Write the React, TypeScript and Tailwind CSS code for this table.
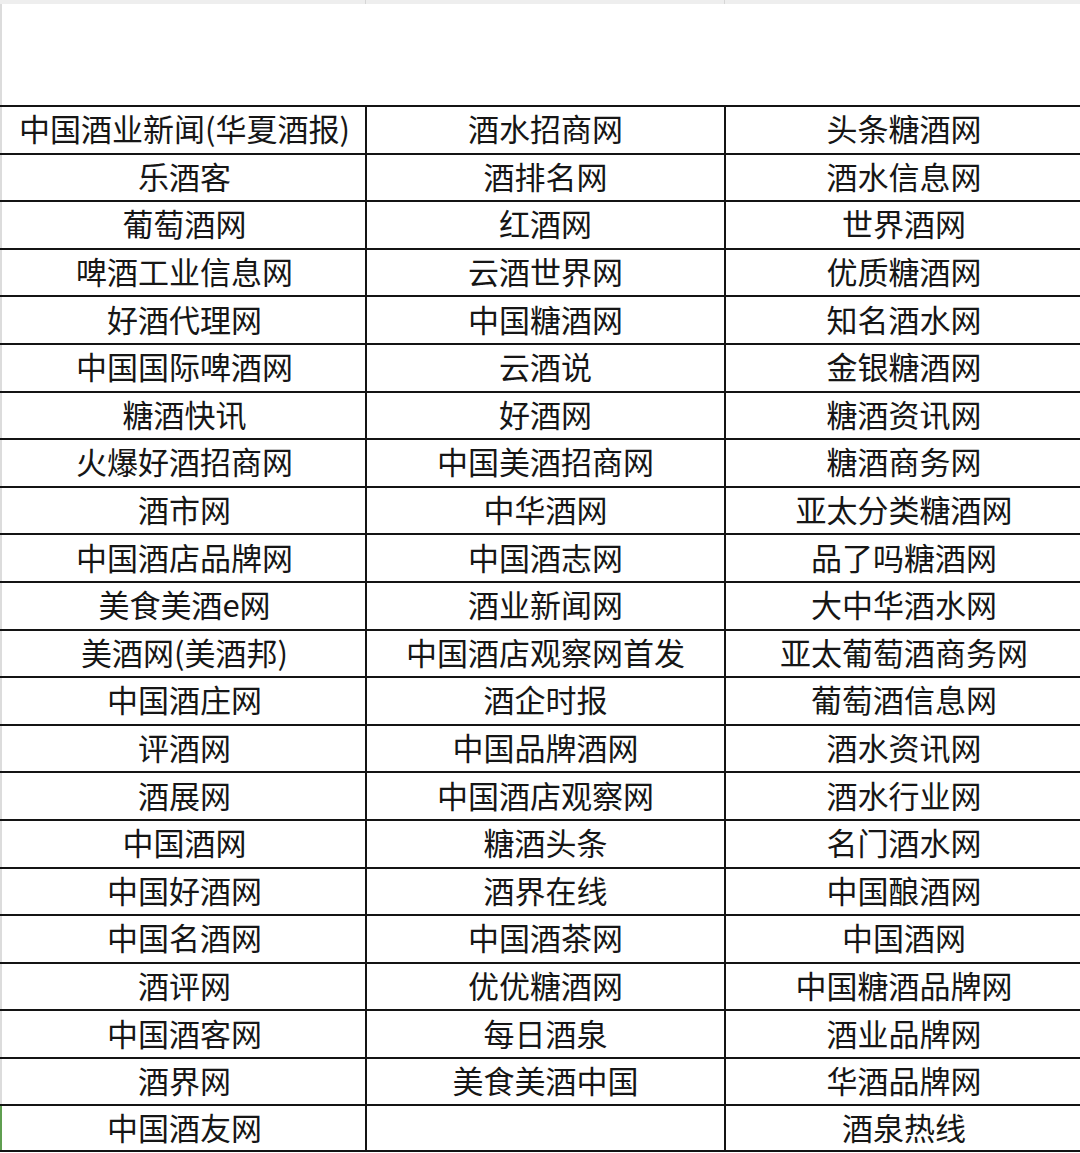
import React from "react";

const left = ["中国酒业新闻(华夏酒报)", "乐酒客", "葡萄酒网", "啤酒工业信息网", "好酒代理网", "中国国际啤酒网", "糖酒快讯", "火爆好酒招商网", "酒市网", "中国酒店品牌网", "美食美酒e网", "美酒网(美酒邦)", "中国酒庄网", "评酒网", "酒展网", "中国酒网", "中国好酒网", "中国名酒网", "酒评网", "中国酒客网", "酒界网", "中国酒友网"];
const mid = ["酒水招商网", "酒排名网", "红酒网", "云酒世界网", "中国糖酒网", "云酒说", "好酒网", "中国美酒招商网", "中华酒网", "中国酒志网", "酒业新闻网", "中国酒店观察网首发", "酒企时报", "中国品牌酒网", "中国酒店观察网", "糖酒头条", "酒界在线", "中国酒茶网", "优优糖酒网", "每日酒泉", "美食美酒中国", ""];
const right = ["头条糖酒网", "酒水信息网", "世界酒网", "优质糖酒网", "知名酒水网", "金银糖酒网", "糖酒资讯网", "糖酒商务网", "亚太分类糖酒网", "品了吗糖酒网", "大中华酒水网", "亚太葡萄酒商务网", "葡萄酒信息网", "酒水资讯网", "酒水行业网", "名门酒水网", "中国酿酒网", "中国酒网", "中国糖酒品牌网", "酒业品牌网", "华酒品牌网", "酒泉热线"];

export default function App() {
  return (
    <div
      className="relative h-[1153px] w-[1080px] overflow-hidden bg-white text-[#161616]"
      style={{ fontFamily: '"Noto Sans CJK SC", "Noto Sans", sans-serif' }}
    >
      <div className="flex h-[4px] bg-[#eeeeee]">
        <div className="w-[366px] border-r border-[#d6d6d6]" />
        <div className="w-[359px] border-r border-[#d6d6d6]" />
        <div className="flex-1" />
      </div>
      <div className="h-[101px] border-l-2 border-[#dcdcdc]" />
      <div className="flex flex-col">
        {left.map((l, i) => {
          const last = i === left.length - 1;
          return (
            <div
              key={i}
              className={
                "flex h-[47.6px] border-t-2 border-[#141414] " +
                (last ? "border-b-2" : "")
              }
            >
              <div
                className={
                  "flex w-[367px] items-center justify-center border-r-2 border-r-[#141414] border-l-2 pb-[4px] pl-[2px] text-[31px] leading-none " +
                  (last ? "border-l-[#5f9e50]" : "border-l-[#dcdcdc]")
                }
              >
                {l}
              </div>
              <div className="flex w-[359px] items-center justify-center border-r-2 border-r-[#141414] pb-[4px] text-[31px] leading-none">
                {mid[i]}
              </div>
              <div className="flex flex-1 items-center justify-center pb-[4px] pl-[2px] text-[31px] leading-none">
                {right[i]}
              </div>
            </div>
          );
        })}
      </div>
    </div>
  );
}
